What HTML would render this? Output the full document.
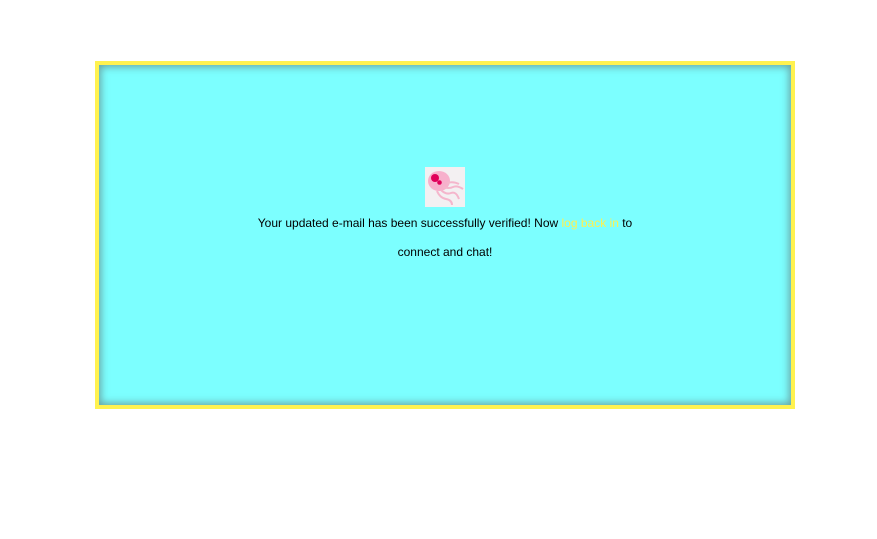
<!DOCTYPE html>
<html><head><meta charset="utf-8"><style>
html,body{margin:0;padding:0;background:#fff;width:877px;height:539px;overflow:hidden;font-family:"Liberation Sans",Arial,sans-serif;}
.box{position:absolute;left:95px;top:61px;width:692px;height:340px;border:4px solid #fff24f;background:#7cffff;box-shadow:inset 0 0 8px 2px rgba(90,90,90,.55);}
.img{position:absolute;left:326px;top:102px;width:40px;height:40px;background:#f3f0f2;}
.t{position:absolute;left:0;width:692px;text-align:center;font-size:12px;color:#000;}
a{color:#fff24f;text-decoration:none;}
</style></head><body>
<div class="box">
<div class="img"><svg width="40" height="40" viewBox="0 0 40 40">
<ellipse cx="14" cy="14" rx="11" ry="10" fill="#f7b0cc"/>
<circle cx="10" cy="11" r="4" fill="#e0005a"/>
<circle cx="14.5" cy="15.5" r="2.3" fill="#e0005a"/>
<g fill="none" stroke="#f4b6cc" stroke-width="2">
<path d="M18 20 q6 2 10 0 t10 2"/><path d="M16 23 q5 5 10 3 t8 6"/><path d="M12 24 q3 7 9 8 t6 6"/><path d="M22 16 q6 -2 12 1"/></g>
</svg></div>
<div class="t" style="top:151px;">Your updated e-mail has been successfully verified! Now <a>log back in</a> to</div>
<div class="t" style="top:180px;">connect and chat!</div>
</div>
</body></html>
